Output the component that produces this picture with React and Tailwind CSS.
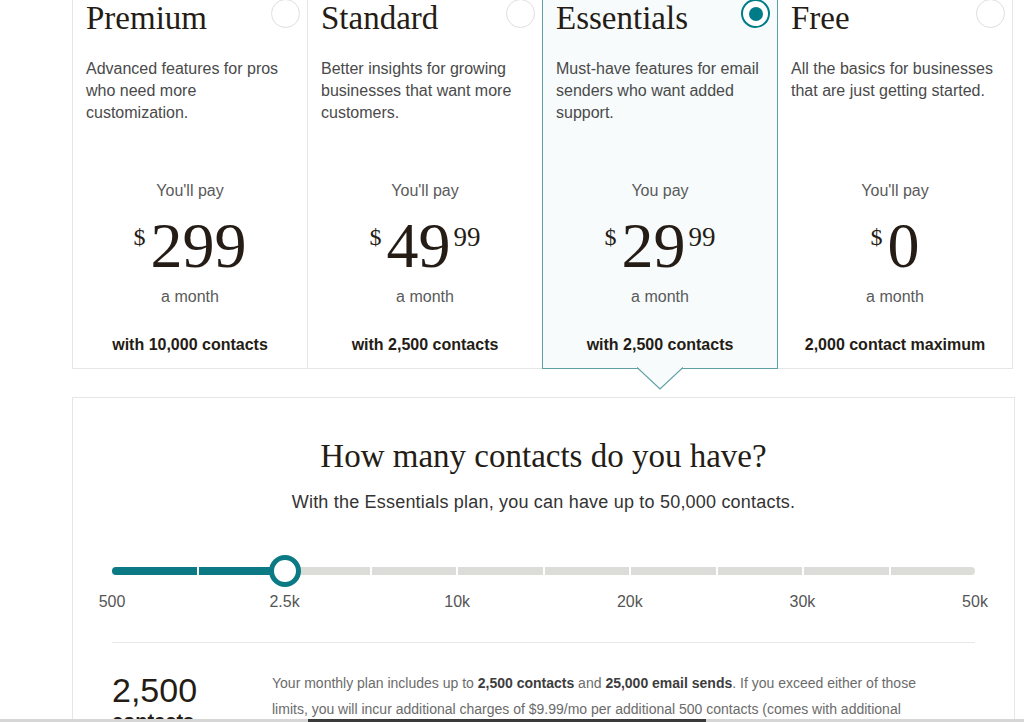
// Pricing plan picker with contacts slider.
import clsx from "clsx";

const SERIF = { fontFamily: '"Liberation Serif", "Times New Roman", serif' };

const plans = [
  {
    name: "Premium",
    desc: "Advanced features for pros who need more customization.",
    pay: "You'll pay",
    dollars: "299",
    cents: "",
    note: "with 10,000 contacts",
  },
  {
    name: "Standard",
    desc: "Better insights for growing businesses that want more customers.",
    pay: "You'll pay",
    dollars: "49",
    cents: "99",
    note: "with 2,500 contacts",
  },
  {
    name: "Essentials",
    desc: "Must-have features for email senders who want added support.",
    pay: "You pay",
    dollars: "29",
    cents: "99",
    note: "with 2,500 contacts",
    selected: true,
  },
  {
    name: "Free",
    desc: "All the basics for businesses that are just getting started.",
    pay: "You'll pay",
    dollars: "0",
    cents: "",
    note: "2,000 contact maximum",
  },
];

const labels = ["500", "2.5k", "10k", "20k", "30k", "50k"];

const Radio = ({ checked }) =>
  checked ? (
    <span className="-mr-[6px] -mt-[3px] flex h-[29px] w-[29px] shrink-0 items-center justify-center rounded-full border-2 border-[#007c89] bg-white">
      <span className="h-[14px] w-[14px] rounded-full bg-[#007c89]" />
    </span>
  ) : (
    <span className="-mr-[6px] -mt-[3px] h-[29px] w-[29px] shrink-0 rounded-full border-[1.5px] border-[#dedede] bg-white" />
  );

const PlanCard = ({ plan, first }) => (
  <div
    className={clsx(
      "relative flex w-[236px] flex-col border px-[13px] pb-[12px] pt-[9px]",
      !first && "-ml-px",
      plan.selected
        ? "z-10 border-[#5e9fa6] bg-[#f7fbfc]"
        : "border-[#e6e6e6] bg-white"
    )}
  >
    <div className="flex items-start justify-between">
      <h3 className="text-[33px] leading-none text-[#241c15]" style={SERIF}>
        {plan.name}
      </h3>
      <Radio checked={plan.selected} />
    </div>
    <p className="mt-[23px] h-[66px] text-[16px] leading-[22px] text-[#4a4a4a]">
      {plan.desc}
    </p>
    <p className="mt-[56px] text-center text-[16px] leading-[22px] text-[#5a5a5a]">
      {plan.pay}
    </p>
    <div
      className="mt-[12px] flex h-[64px] items-start justify-center text-[#241c15]"
      style={SERIF}
    >
      <span className="mr-[5px] mt-[11px] text-[24px] leading-none">$</span>
      <span className="text-[64px] leading-none">{plan.dollars}</span>
      {plan.cents && (
        <span className="ml-[3px] mt-[10px] text-[27px] leading-none">
          {plan.cents}
        </span>
      )}
    </div>
    <p className="mt-[8px] text-center text-[16px] leading-[22px] text-[#5a5a5a]">
      a month
    </p>
    <p className="mt-[26px] text-center text-[16px] font-semibold leading-[22px] text-[#241c15]">
      {plan.note}
    </p>
    {plan.selected && (
      <svg
        className="absolute left-1/2 top-[calc(100%-1px)] -translate-x-1/2"
        width="46"
        height="23"
        viewBox="0 0 46 23"
      >
        <polygon points="0,0 23,22 46,0" fill="#f7fbfc" />
        <polyline
          points="0,0.5 23,22 46,0.5"
          fill="none"
          stroke="#5e9fa6"
          strokeWidth="1.2"
        />
      </svg>
    )}
  </div>
);

const ContactSlider = () => (
  <div className="mt-[41px]">
    <div className="relative flex h-[32px] items-center">
      <div className="flex h-[8px] w-full gap-[2px] overflow-hidden rounded-full">
        {Array.from({ length: 10 }).map((_, i) => (
          <span
            key={i}
            className={clsx("h-full flex-1", i < 2 ? "bg-[#0b7a84]" : "bg-[#dcdcd8]")}
          />
        ))}
      </div>
      <span className="absolute left-[157px] top-0 h-[32px] w-[32px] rounded-full border-[5px] border-[#0b7a84] bg-white" />
    </div>
    <div className="mt-[5px] flex justify-between text-[16px] leading-[20px] text-[#555]">
      {labels.map((l) => (
        <span key={l} className="flex w-0 justify-center whitespace-nowrap">
          {l}
        </span>
      ))}
    </div>
  </div>
);

export default function App() {
  return (
    <div
      className="relative h-[722px] overflow-hidden bg-white"
      style={{ fontFamily: '"Liberation Sans", Arial, sans-serif' }}
    >
      <div className="-mt-[8px] ml-[72px] flex">
        {plans.map((p, i) => (
          <PlanCard key={p.name} plan={p} first={i === 0} />
        ))}
      </div>

      <section className="ml-[72px] mt-[28px] w-[943px] border border-[#e6e6e6] px-[39px] pb-10 pt-[42px]">
        <h2
          className="text-center text-[33px] leading-none text-[#241c15]"
          style={SERIF}
        >
          How many contacts do you have?
        </h2>
        <p className="mt-[17px] text-center text-[18px] leading-[24px] tracking-[0.2px] text-[#333]">
          With the Essentials plan, you can have up to 50,000 contacts.
        </p>

        <ContactSlider />

        <div className="mt-[30px] h-px bg-[#e8e8e8]" />

        <div className="mt-[27px] flex">
          <div className="w-[160px] shrink-0 pt-[3px] text-[#241c15]">
            <div className="text-[34px] leading-none">2,500</div>
            <div className="mt-[2px] text-[20px] font-semibold leading-[24px]">
              contacts
            </div>
          </div>
          <p className="w-[660px] text-[14px] leading-[26px] text-[#6b6b6b]">
            Your monthly plan includes up to{" "}
            <span className="font-semibold text-[#3d3d3d]">2,500 contacts</span> and{" "}
            <span className="font-semibold text-[#3d3d3d]">25,000 email sends</span>.
            If you exceed either of those limits, you will incur additional charges
            of $9.99/mo per additional 500 contacts (comes with additional email
            sends).
          </p>
        </div>
      </section>

      <div className="fixed bottom-0 left-0 flex h-[3px] w-full bg-[#d6d6d6]">
        <span className="ml-[308px] h-full w-[398px] bg-[#3a3a3a]" />
      </div>
    </div>
  );
}
